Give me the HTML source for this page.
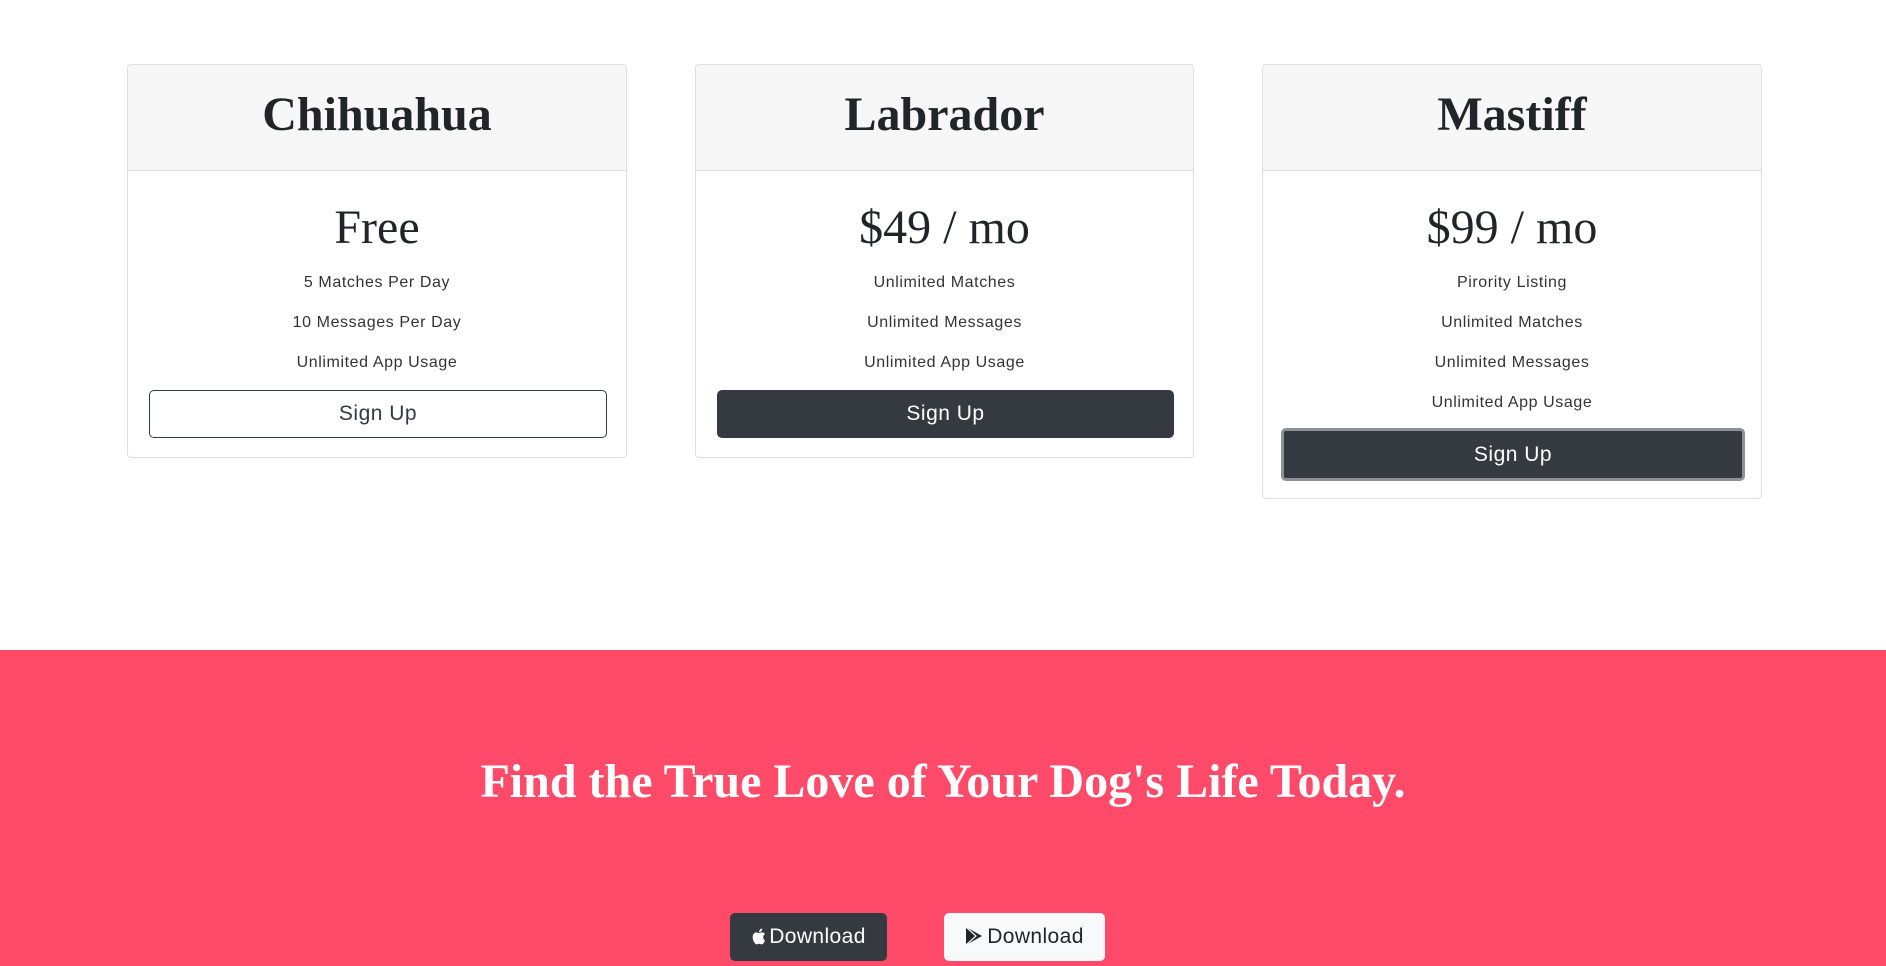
<!DOCTYPE html>
<html><head><meta charset="utf-8"><style>
*{margin:0;padding:0;box-sizing:border-box}
body{width:1886px;height:966px;background:#fff;position:relative;overflow:hidden;font-family:"Liberation Sans",sans-serif;color:#212529}
.card{position:absolute;border:1px solid #dfdfdf;border-radius:4px;background:#fff;overflow:hidden}
.hd{height:106px;background:#f7f7f7;border-bottom:1px solid #dfdfdf;text-align:center;font:bold 48px/100px "Liberation Serif",serif;color:#212529}
.price{position:absolute;left:0;right:0;text-align:center;font:48px/1 "Liberation Serif",serif}
.it{position:absolute;left:0;right:0;text-align:center;font-size:16px;line-height:18px;letter-spacing:.6px;color:#333}
.btn{position:absolute;border-radius:5px;text-align:center;font-size:21px;letter-spacing:.5px}
.pink{position:absolute;left:0;top:650px;width:1886px;height:316px;background:#ff4b69}
h2{position:absolute;left:0;right:0;top:755px;text-align:center;color:#fff;font:bold 48px/54px "Liberation Serif",serif}
.dl{position:absolute;top:913px;height:48px;border-radius:5px;font-size:21px;line-height:48px;text-align:center;letter-spacing:.4px}
</style></head><body>

<div class="card" style="left:127px;top:64px;width:500px;height:394px">
<div class="hd">Chihuahua</div>
<div class="price" style="top:139px">Free</div>
<div class="it" style="top:209px">5 Matches Per Day</div>
<div class="it" style="top:249px">10 Messages Per Day</div>
<div class="it" style="top:289px">Unlimited App Usage</div>
<div class="btn" style="left:21px;top:325px;width:458px;height:48px;border:1px solid #343a40;line-height:46px;color:#343a40">Sign Up</div>
</div>

<div class="card" style="left:695px;top:64px;width:499px;height:394px">
<div class="hd">Labrador</div>
<div class="price" style="top:139px">$49 / mo</div>
<div class="it" style="top:209px">Unlimited Matches</div>
<div class="it" style="top:249px">Unlimited Messages</div>
<div class="it" style="top:289px">Unlimited App Usage</div>
<div class="btn" style="left:21px;top:325px;width:457px;height:48px;background:#343a40;line-height:48px;color:#fff">Sign Up</div>
</div>

<div class="card" style="left:1262px;top:64px;width:500px;height:435px">
<div class="hd">Mastiff</div>
<div class="price" style="top:139px">$99 / mo</div>
<div class="it" style="top:209px">Pirority Listing</div>
<div class="it" style="top:249px">Unlimited Matches</div>
<div class="it" style="top:289px">Unlimited Messages</div>
<div class="it" style="top:329px">Unlimited App Usage</div>
<div class="btn" style="left:18px;top:363px;width:464px;height:53px;background:#343a40;border:3px solid #8d9196;line-height:47px;color:#fff">Sign Up</div>
</div>

<div class="pink"></div>
<h2>Find the True Love of Your Dog's Life Today.</h2>
<div class="dl" style="left:730px;width:157px;background:#343a40;color:#fff"><svg width="15" height="17" viewBox="0 0 15 17" style="vertical-align:-2px;margin-right:3px"><path fill="#fff" d="M12.3 9c0-2 1.6-2.9 1.7-3-1-1.4-2.4-1.6-2.9-1.6-1.2-.1-2.4.7-3 .7s-1.6-.7-2.6-.7C4.2 4.4 3 5.2 2.3 6.4.9 8.9 2 12.6 3.3 14.5c.7.9 1.4 2 2.4 1.9 1-.1 1.3-.6 2.5-.6s1.5.6 2.5.6c1 0 1.7-1 2.3-1.900.7-1.1 1-2.1 1-2.2 0 0-2-.8-1.7-3.3zM10.4 3c.5-.7.9-1.6.8-2.5-.8 0-1.8.5-2.3 1.2-.5.6-.9 1.5-.8 2.4.9.1 1.8-.4 2.3-1.1z"/></svg>Download</div>
<div class="dl" style="left:944px;width:161px;background:#f8f9fa;color:#212529"><svg width="18" height="20" viewBox="0 0 18 20" style="vertical-align:-3px;margin-right:4px"><path fill="#212529" d="M1 1l16 9-16 9z"/><path stroke="#f8f9fa" stroke-width="1.2" fill="none" d="M1 1l10 9-10 9"/></svg>Download</div>
</body></html>
